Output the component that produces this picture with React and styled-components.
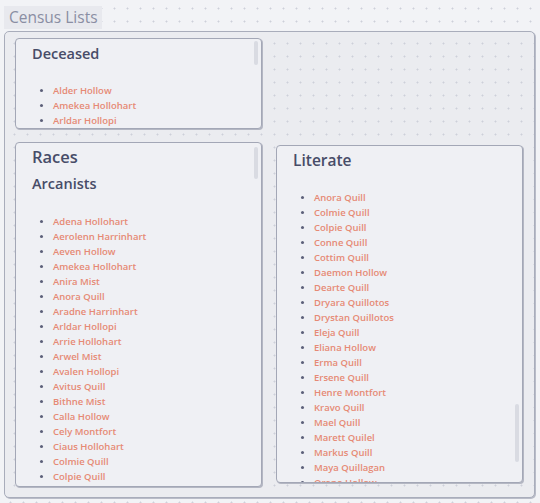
import React from "react";
import styled, { createGlobalStyle } from "styled-components";

const GlobalStyle = createGlobalStyle`
  html, body {
    margin: 0;
    padding: 0;
    background: #f2f3f6;
  }
  body {
    font-family: "Open Sans", "Noto Sans", sans-serif;
  }
`;

const dots = `
  background-image: radial-gradient(circle, #cdd0d9 0.8px, transparent 1.2px);
  background-size: 13px 13px;
`;

const lists = {
  deceased: ["Alder Hollow", "Amekea Hollohart", "Arldar Hollopi", "Arwel Mist", "Bithne Mist"],
  arcanists: [
    "Adena Hollohart",
    "Aerolenn Harrinhart",
    "Aeven Hollow",
    "Amekea Hollohart",
    "Anira Mist",
    "Anora Quill",
    "Aradne Harrinhart",
    "Arldar Hollopi",
    "Arrie Hollohart",
    "Arwel Mist",
    "Avalen Hollopi",
    "Avitus Quill",
    "Bithne Mist",
    "Calla Hollow",
    "Cely Montfort",
    "Ciaus Hollohart",
    "Colmie Quill",
    "Colpie Quill",
    "Conne Quill",
    "Cottim Quill",
  ],
  literate: [
    "Anora Quill",
    "Colmie Quill",
    "Colpie Quill",
    "Conne Quill",
    "Cottim Quill",
    "Daemon Hollow",
    "Dearte Quill",
    "Dryara Quillotos",
    "Drystan Quillotos",
    "Eleja Quill",
    "Eliana Hollow",
    "Erma Quill",
    "Ersene Quill",
    "Henre Montfort",
    "Kravo Quill",
    "Mael Quill",
    "Marett Quilel",
    "Markus Quill",
    "Maya Quillagan",
    "Orane Hollow",
  ],
};

function NameList({ names, gap }) {
  return (
    <List gap={gap}>
      {names.map((n, i) => (
        <Item key={i}>{n}</Item>
      ))}
    </List>
  );
}

export default function App() {
  return (
    <>
      <GlobalStyle />
      <Page>
        <Title>Census Lists</Title>
        <Board>
          <Column>
            <Panel height={91} pad={5}>
              <Heading>Deceased</Heading>
              <NameList names={lists.deceased} gap={19} />
              <Thumb top={2} size={24} />
            </Panel>
            <Panel height={345} pad={3}>
              <Heading size={16.5} lh={22}>Races</Heading>
              <SubHeading>Arcanists</SubHeading>
              <NameList names={lists.arcanists} gap={20} />
              <Thumb top={4} size={32} />
            </Panel>
          </Column>
          <Column offset={107}>
            <Panel height={338} pad={4}>
              <Heading size={15.5}>Literate</Heading>
              <NameList names={lists.literate} gap={20} />
              <Thumb top={258} size={58} />
            </Panel>
          </Column>
        </Board>
      </Page>
    </>
  );
}

const Page = styled.div`
  height: 503px;
  box-sizing: border-box;
  padding: 6px 5px 0 4px;
  ${dots}
  background-position: 4px 2px;
`;

const Title = styled.div`
  display: inline-block;
  padding: 0 4px 0 5px;
  height: 23px;
  line-height: 23px;
  font-size: 15.5px;
  color: #8a8ea3;
  background: #e8e9ee;
`;

const Board = styled.div`
  margin-top: 2px;
  height: 467px;
  box-sizing: border-box;
  border: 1px solid #a9adbb;
  border-radius: 5px;
  box-shadow: 1px 1px 0 #b9bcc8;
  background-color: #ebecf0;
  ${dots}
  background-position: 3px 5px;
  display: grid;
  grid-template-columns: 247px 247px;
  column-gap: 14px;
  align-items: start;
  padding: 6px 0 0 10px;
`;

const Column = styled.div`
  display: flex;
  flex-direction: column;
  gap: 13px;
  padding-top: ${(p) => p.offset || 0}px;
`;

const Panel = styled.section`
  position: relative;
  height: ${(p) => p.height}px;
  box-sizing: border-box;
  overflow: hidden;
  border: 1px solid #a3a7b6;
  border-radius: 4px;
  box-shadow: 1px 1px 0 #b4b7c3;
  background: #eff0f4;
  padding: ${(p) => p.pad}px 8px 0 16px;
`;

const Heading = styled.h2`
  margin: 0;
  font-size: ${(p) => p.size || 14.5}px;
  line-height: ${(p) => p.lh || 20}px;
  font-weight: 600;
  color: #474c68;
`;

const SubHeading = styled.h3`
  margin: 6px 0 0;
  font-size: 14.5px;
  line-height: 20px;
  font-weight: 600;
  color: #474c68;
`;

const List = styled.ul`
  list-style: none;
  margin: ${(p) => p.gap}px 0 0;
  padding: 0 0 0 8px;
`;

const Item = styled.li`
  display: flex;
  align-items: center;
  height: 15px;
  font-size: 9.5px;
  font-weight: 600;
  color: #e68a75;

  &::before {
    content: "";
    width: 3px;
    height: 3px;
    border-radius: 50%;
    background: #5c6079;
    margin-right: 10px;
    flex: none;
  }
`;

const Thumb = styled.div`
  position: absolute;
  right: 3px;
  top: ${(p) => p.top}px;
  width: 4px;
  height: ${(p) => p.size}px;
  border-radius: 2px;
  background: #d9dbe2;
`;
